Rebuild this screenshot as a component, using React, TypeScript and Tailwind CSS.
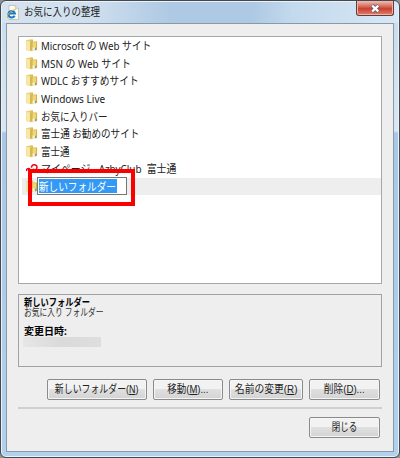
import type { ReactNode } from "react";

interface Favorite {
  label: string;
  stretch: string;
}

const favorites: Favorite[] = [
  { label: "Microsoft の Web サイト", stretch: "scale-x-[0.887]" },
  { label: "MSN の Web サイト", stretch: "scale-x-[0.9]" },
  { label: "WDLC おすすめサイト", stretch: "scale-x-[0.883]" },
  { label: "Windows Live", stretch: "scale-x-[0.914]" },
  { label: "お気に入りバー", stretch: "scale-x-[0.864]" },
  { label: "富士通 お勧めのサイト", stretch: "scale-x-[0.871]" },
  { label: "富士通", stretch: "scale-x-[0.864]" },
];

const FolderIcon = () => (
  <svg className="h-[13px] w-3 shrink-0" viewBox="0 0 12 13">
    <path d="M0 1.2 5 .3H7v2h3.9v8.5L5.6 12.2 0 11z" fill="#e8cf72" />
    <path d="M4.6 1H7v10.5H4.6z" fill="#d9bb58" />
    <path d="M.2 1.5 4.3 2.8v9L.2 11z" fill="#f6e9a6" />
    <path d="M4.7 3v8.5M10.6 2.8v8" stroke="#c9a642" strokeWidth=".8" />
    <path d="M6.7 3.7h3v4.8h-3z" fill="#f1d873" />
    <path d="M6.5 8.5h2.2v3.2H6.5z" fill="#faf2cd" />
    <path d="M9 8.8h1.4v2.5H9z" fill="#829f90" />
  </svg>
);

const PageIcon = () => (
  <svg className="h-[15px] w-3 shrink-0" viewBox="0 0 12 15">
    <path d="M2 .5h6.5l3 3v11H2z" fill="#fbfbf3" stroke="#b5b3a4" strokeWidth=".7" />
    <path d="M8.3.5v3.2h3.2" fill="#e8e4d3" stroke="#b8b7a8" strokeWidth=".6" />
    <path d="M7.6 10.8A3.3 3.3 0 1 1 7.9 8.4H1.8" fill="none" stroke="#1478cc" strokeWidth="2" />
    <path d="M.6 13C-.7 10.5 3.8 4.5 8.8 4.8" fill="none" stroke="#e2b33c" strokeWidth="1" />
  </svg>
);

const UserIcon = () => (
  <svg className="h-3 w-3 shrink-0" viewBox="0 0 12 12">
    <path d="M5.6 4.6C5 1.2 11 .8 11 4.2S8 6.8 6.8 6.2M4 6C1.8 4.6 0 6.4.8 8" fill="none" stroke="#e00b17" strokeWidth="1.5" />
  </svg>
);

interface DialogButtonProps {
  className: string;
  stretch: string;
  children: ReactNode;
}

const DialogButton = ({ className, stretch, children }: DialogButtonProps) => (
  <button
    className={`flex h-[21px] items-center justify-center whitespace-nowrap rounded-[2px] border border-[#8b8b8b] bg-gradient-to-b from-[#f2f2f2] from-45% via-[#e0e0e0] via-50% to-[#d3d3d3] font-['Liberation_Sans','Noto_Sans_CJK_JP',sans-serif] text-[11px] leading-none shadow-[inset_0_0_0_1px_#f5f5f5] ${className}`}
  >
    <span className={stretch}>{children}</span>
  </button>
);

export default function App() {
  return (
    <div className="h-[458px] w-[400px] bg-[#8e9295] font-['Noto_Sans','Noto_Sans_CJK_JP',sans-serif] text-[#222]">
      <div className="flex h-[458px] flex-col rounded-[6px] border border-[#45484e] bg-[linear-gradient(180deg,#c7dbed_0,#d8e7f3_130px,#a8c8e6_132px,#b2d1ec_458px)] px-[5px] shadow-[inset_0_0_0_1px_#e8f3fa]">
        <header className="-mx-1 mt-px flex h-[21px] shrink-0 items-start rounded-t-[5px] bg-[linear-gradient(90deg,#d5e3ef_0,#cfdfee_90px,#adc9e3_170px,#adc9e3_250px,#c3d9ed_290px,#d8e8f4_100%)] pl-[5px] pr-[4px]">
          <div className="mt-[3px]">
            <PageIcon />
          </div>
          <h1 className="ml-[5px] mt-[2px] origin-left scale-x-[0.864] text-[11px] leading-[16px]">お気に入りの整理</h1>
          <button className="ml-auto -mt-px flex h-[15px] w-[38px] items-center justify-center rounded-b-[3px] border border-t-0 border-[#663a3b] bg-gradient-to-b from-[#e8aaa0] from-10% via-[#c8402f] via-55% to-[#df8069] shadow-[inset_0_0_0_1px_#eeb6a8]">
            <svg className="h-[9px] w-[11px]" viewBox="0 0 11 9">
              <path d="M2 1.5 8.5 7.5M8.5 1.5 2 7.5" stroke="#635d6b" strokeWidth="3.8" />
              <path d="M2.2 1.6 8.3 7.4M8.3 1.6 2.2 7.4" stroke="white" strokeWidth="2.2" />
            </svg>
          </button>
        </header>

        <main className="flex h-[429px] shrink-0 flex-col border border-[#8999a8] bg-[#eee] px-[11px] pt-3">
          <div className="relative h-[248px] shrink-0 border border-[#a5a7aa] bg-white">
            {favorites.map((item) => (
              <div key={item.label} className="flex h-[17.6px] items-center gap-[3px] whitespace-nowrap pl-[7px] text-[11px] leading-none">
                <FolderIcon />
                <span className={`origin-left ${item.stretch}`}>{item.label}</span>
              </div>
            ))}
            <div className="flex h-[17.6px] items-center gap-[3px] pl-[7px] text-[11px] leading-none">
              <UserIcon />
              <span className="origin-left scale-x-[0.9] whitespace-pre">マイページ - AzbyClub  富士通</span>
            </div>
            <div className="ml-[3px] flex h-[17px] items-center bg-[#eee] pl-1">
              <FolderIcon />
              <div className="-ml-[1px] flex h-[18px] w-[90px] items-center border border-[#777] bg-white pl-px">
                <div className="flex h-[14px] w-[78px] items-center bg-[#3399f5]">
                  <span className="origin-left scale-x-[0.875] whitespace-nowrap text-[11px] leading-none text-white">新しいフォルダー</span>
                </div>
              </div>
            </div>
            <div className="absolute left-[9px] top-[132px] h-[37px] w-[107px] border-4 border-[#fa0000]" />
          </div>

          <section className="mt-[10px] h-[73px] shrink-0 border border-[#a2a2a6] pl-[5px] pt-[2px] text-[10px] leading-[10px]">
            <p className="origin-left scale-x-[0.825] font-bold text-black">新しいフォルダー</p>
            <p className="origin-left scale-x-[0.775] text-[#333]">お気に入り フォルダー</p>
            <p className="mt-[9px] font-bold text-black">変更日時:</p>
            <div className="-ml-px mt-px h-[10px] w-[78px] bg-gradient-to-r from-[#e6e6e6] via-[#dadada] to-[#dedede]" />
          </section>

          <div className="mt-3 flex justify-end gap-[6px] pr-[2px]">
            <DialogButton className="w-[100px]" stretch="scale-x-[0.81]">
              新しいフォルダー(<u>N</u>)
            </DialogButton>
            <DialogButton className="w-[70px]" stretch="scale-x-[0.86]">
              移動(<u>M</u>)...
            </DialogButton>
            <DialogButton className="w-[74px]" stretch="scale-x-[0.89]">
              名前の変更(<u>R</u>)
            </DialogButton>
            <DialogButton className="w-[71px]" stretch="scale-x-[0.88]">
              削除(<u>D</u>)...
            </DialogButton>
          </div>
          <div className="mt-[7px] h-[2px] shrink-0 bg-[#cfcfcf]" />
          <div className="mt-2 flex justify-end pr-[2px]">
            <DialogButton className="w-[71px]" stretch="scale-x-[0.77]">
              閉じる
            </DialogButton>
          </div>
        </main>
      </div>
    </div>
  );
}
